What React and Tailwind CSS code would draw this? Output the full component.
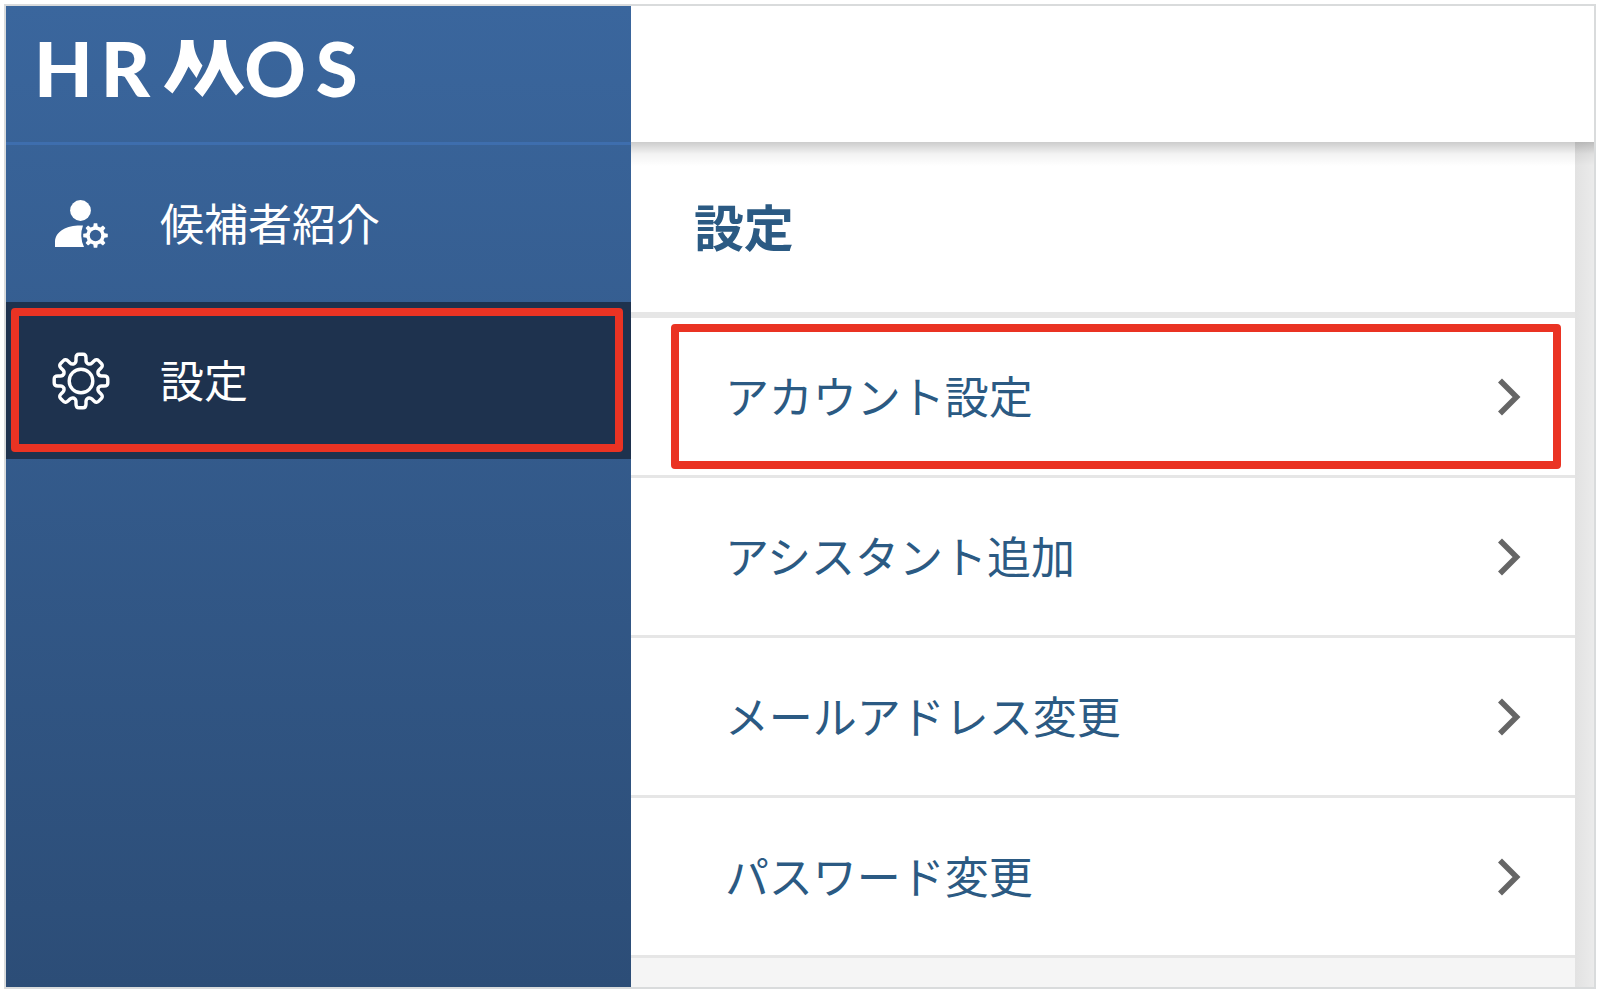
const MENU = ["アカウント設定", "アシスタント追加", "メールアドレス変更", "パスワード変更"];

// Plain gear outline: each tooth is a trapezoid between the inner and outer radius
function gearPath(teeth, outer, inner, topHalf, baseHalf) {
  const points = [];
  for (let i = 0; i < teeth; i++) {
    const mid = (i * 2 * Math.PI) / teeth - Math.PI / 2;
    [
      [inner, -baseHalf],
      [outer, -topHalf],
      [outer, topHalf],
      [inner, baseHalf],
    ].forEach(([r, off]) => {
      const a = mid + off;
      points.push(`${(r * Math.cos(a)).toFixed(2)} ${(r * Math.sin(a)).toFixed(2)}`);
    });
  }
  return `M${points.join("L")}Z`;
}

// Gear outline with eight rounded teeth
function roundGearPath() {
  const teeth = [0, 45, 90, 135, 180, 225, 270, 315].map((deg, i) => {
    const a = (deg * Math.PI) / 180;
    const p = (x, y) =>
      `${(x * Math.cos(a) - y * Math.sin(a)).toFixed(2)} ${(x * Math.sin(a) + y * Math.cos(a)).toFixed(2)}`;
    return `${i ? "L" : "M"}${p(-7.5, -17)}Q${p(-5, -18)} ${p(-5, -20.5)}L${p(-5, -23)}Q${p(-5, -26.8)} ${p(-2, -26.8)}L${p(2, -26.8)}Q${p(5, -26.8)} ${p(5, -23)}L${p(5, -20.5)}Q${p(5, -18)} ${p(7.5, -17)}`;
  });
  return teeth.join("") + "Z";
}

function GearIcon() {
  return (
    <svg viewBox="-29 -29 58 58" className="w-[58px] h-[58px]" fill="none" stroke="currentColor" strokeWidth="3.4" strokeLinejoin="round">
      <circle r="11.8" />
      <path d={roundGearPath()} />
    </svg>
  );
}

function UserGearIcon() {
  return (
    <svg viewBox="0 0 58 52" className="w-[58px] h-[52px]" fill="currentColor">
      <circle cx="28.5" cy="12.5" r="10.4" />
      <path d="M3 49V43C4 33 15 27.500 28 27.500H31Q27 38 32 49Z" />
      <g transform="translate(43.5 37.5)">
        <path d={gearPath(8, 12.4, 9.3, 0.14, 0.24)} />
        <circle r="5.700" fill="#365f94" />
      </g>
    </svg>
  );
}

function ChevronIcon() {
  return (
    <svg viewBox="0 0 24 40" className="w-6 h-10" fill="none" stroke="#666" strokeWidth="5.6">
      <path d="M3 3.500L19.500 20L3 36.500" />
    </svg>
  );
}

function Logo() {
  return (
    <a href="#" aria-label="HRMOS" className="flex items-center font-[Lato,sans-serif] text-[76px] leading-[76px] font-black text-white">
      <span>H</span>
      <span className="ml-2">R</span>
      <svg viewBox="0 0 80 57" className="ml-3.5 w-20 h-[57px]" fill="currentColor">
        <path d="M17 0H29.500C29.500 10 33 18 38.500 25.500L32.500 38L24.500 26.500C20 36 15 45 8.500 53.500L0 46.500C9 34 17 20 17 0Z" />
        <path d="M50 0H62C62 18 70 35 80 47.500L72 55.500C65 47 59 38 55.500 29C51 39 45 48 38.500 57L30 48.500C41 36 50 19 50 0Z" />
      </svg>
      <span>O</span>
      <span className="ml-2.5">S</span>
    </a>
  );
}

export default function App() {
  return (
    <div className="min-h-screen flex bg-white pt-1 pl-1 pr-2.5 pb-[9px] font-['Noto_Sans_CJK_JP',sans-serif]">
      <div className="flex flex-1 border-2 border-[#d9dbdc]">
        <aside className="w-[39.35%] shrink-0 bg-gradient-to-b from-[#3a669d] to-[#2c4d77] text-white">
          <div className="h-[139px] pl-7 pt-6 border-b-3 border-[#3e6eae]">
            <Logo />
          </div>
          <nav className="text-[44px] leading-[66px]">
            <a href="#" className="flex items-center h-[157px] pl-[46px] gap-[50px]">
              <UserGearIcon />
              <span className="pb-1">候補者紹介</span>
            </a>
            <a href="#" aria-current="page" className="relative flex items-center h-[157px] pl-[46px] gap-[50px] bg-[#1e324e]">
              <GearIcon />
              <span className="pb-1">設定</span>
              <span className="absolute left-[5px] right-2 top-1.5 bottom-[7px] border-8 border-[#ea3323] rounded" />
            </a>
          </nav>
        </aside>

        <div className="flex-1 min-w-0 flex flex-col">
          <header className="relative h-[136px] overflow-visible bg-white [clip-path:inset(0_0_-40px_0)]">
            <div className="absolute inset-x-0 top-full h-6 bg-gradient-to-b from-black/20 via-black/5 to-transparent" />
          </header>
          <div className="flex-1 flex">
            <main className="flex-1 min-w-0 flex flex-col bg-[#f5f5f5] text-[#2b5a83]">
              <h1 className="h-[176px] pl-[63px] flex items-center bg-white border-b-6 border-[#e6e6e6] text-[50px] leading-[72px] font-bold">
                <span className="pb-1">設定</span>
              </h1>
              <ul>
                {MENU.map((label, i) => (
                  <li key={label} className="relative bg-white border-b-3 border-[#e6e6e6]">
                    <a href="#" className="flex items-center justify-between h-[157px] pl-[94px] pr-[54px] text-[44px] leading-[66px]">
                      <span className="pb-1">{label}</span>
                      <ChevronIcon />
                    </a>
                    {i === 0 && (
                      <span className="absolute left-10 right-3.5 top-1.5 bottom-1.5 border-8 border-[#ea3323] rounded" />
                    )}
                  </li>
                ))}
              </ul>
            </main>
            <div className="w-[19px] bg-gradient-to-r from-[#e2e2e2] to-[#ebebeb]" />
          </div>
        </div>
      </div>
    </div>
  );
}
